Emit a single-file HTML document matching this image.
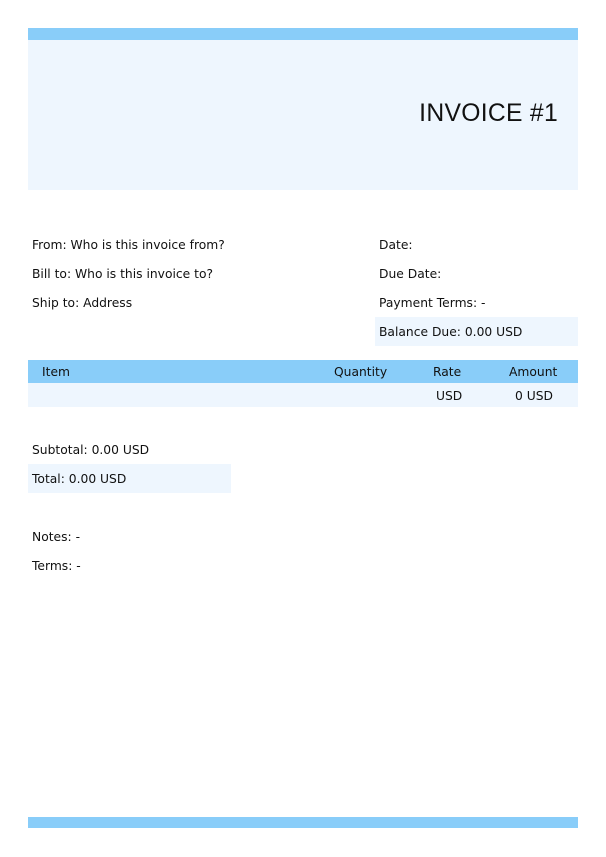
<!DOCTYPE html>
<html><head><style>
body{margin:0;width:606px;height:857px;background:#fff;font-family:"DejaVu Sans",sans-serif;font-size:12.3px;color:#111;position:relative;overflow:hidden}
div{position:absolute}
.bar{background:#89cdf9}
.lt{background:#eef6fe}
.t{line-height:16px;white-space:nowrap}
</style></head><body>
<div class="bar" style="left:28px;top:28px;width:550px;height:12px"></div>
<div class="lt" style="left:28px;top:40px;width:550px;height:150px"></div>
<div class="t" style="right:48px;top:99px;font-family:'Liberation Sans',sans-serif;font-size:24.7px;line-height:30px;letter-spacing:0.3px">INVOICE #1</div>
<div class="t" style="left:32px;top:237px">From: Who is this invoice from?</div>
<div class="t" style="left:32px;top:266px">Bill to: Who is this invoice to?</div>
<div class="t" style="left:32px;top:295px">Ship to: Address</div>
<div class="t" style="left:379px;top:237px">Date:</div>
<div class="t" style="left:379px;top:266px">Due Date:</div>
<div class="t" style="left:379px;top:295px">Payment Terms: -</div>
<div class="lt" style="left:375px;top:317px;width:203px;height:29px"></div>
<div class="t" style="left:379px;top:324px">Balance Due: 0.00 USD</div>
<div class="bar" style="left:28px;top:360px;width:550px;height:23px"></div>
<div class="lt" style="left:28px;top:383px;width:550px;height:24px"></div>
<div class="t" style="left:42px;top:364px">Item</div>
<div class="t" style="left:334px;top:364px">Quantity</div>
<div class="t" style="left:433px;top:364px">Rate</div>
<div class="t" style="left:509px;top:364px">Amount</div>
<div class="t" style="left:436px;top:388px">USD</div>
<div class="t" style="left:515px;top:388px">0 USD</div>
<div class="t" style="left:32px;top:442px">Subtotal: 0.00 USD</div>
<div class="lt" style="left:28px;top:464px;width:203px;height:29px"></div>
<div class="t" style="left:32px;top:471px">Total: 0.00 USD</div>
<div class="t" style="left:32px;top:529px">Notes: -</div>
<div class="t" style="left:32px;top:558px">Terms: -</div>
<div class="bar" style="left:28px;top:817px;width:550px;height:11px"></div>
</body></html>
